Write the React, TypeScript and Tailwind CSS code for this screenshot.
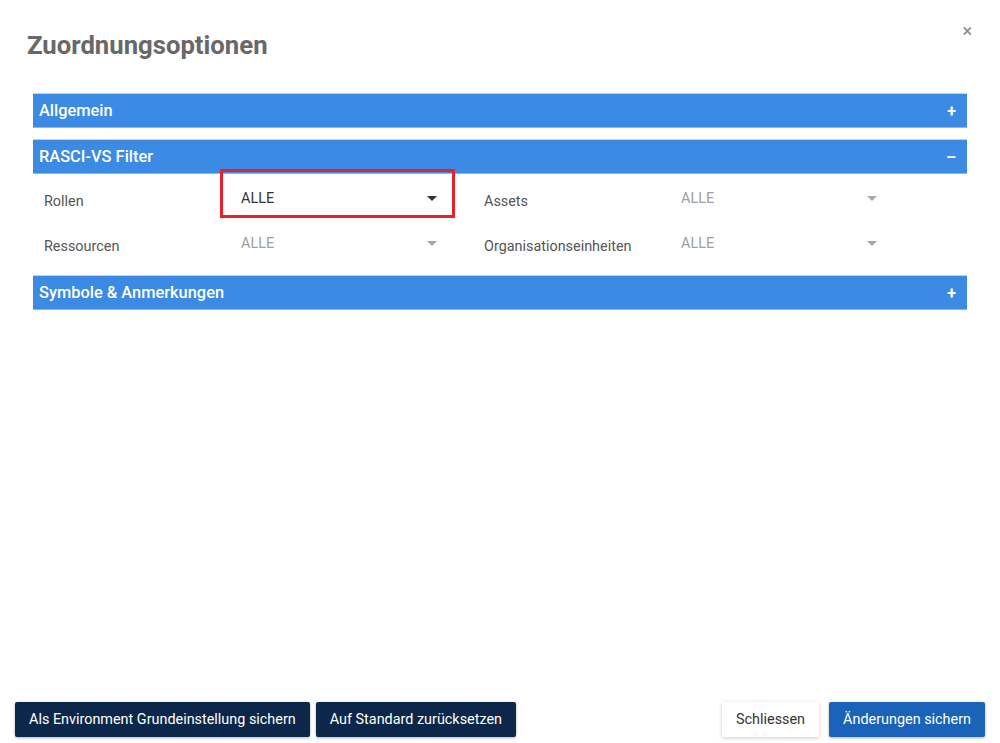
import React from 'react';

interface FilterField {
  label: string;
  value: string;
  active?: boolean;
}

const leftFields: FilterField[] = [
  { label: 'Rollen', value: 'ALLE', active: true },
  { label: 'Ressourcen', value: 'ALLE' },
];

const rightFields: FilterField[] = [
  { label: 'Assets', value: 'ALLE' },
  { label: 'Organisationseinheiten', value: 'ALLE' },
];

const Caret: React.FC<{ active?: boolean }> = ({ active }) => (
  <svg width="10" height="5" viewBox="0 0 10 5" className="shrink-0">
    <path d="M0 0 L10 0 L5 5 Z" fill={active ? '#333333' : '#a8a8a8'} />
  </svg>
);

const PanelHeader: React.FC<{ title: string; open?: boolean }> = ({ title, open }) => (
  <div className="h-[35px] pt-[2px] flex items-center justify-between pl-[6px] pr-[11px] bg-[#3b8ae3] border-t border-t-[#b9d5f5] border-b border-b-[#8ab8ee] text-white">
    <span className="text-[16.4px] font-medium">{title}</span>
    <span className="text-[16px] font-bold leading-none">{open ? '–' : '+'}</span>
  </div>
);

const FieldRow: React.FC<{ field: FilterField }> = ({ field }) => (
  <div className="h-[45px] flex items-center">
    <div className="w-[178px] text-[14.4px] text-[#555] pt-[5px]">{field.label}</div>
    <div className="w-[233px] flex items-center justify-between pl-[19px] pr-[18px] pb-[1px]">
      <span className={`text-[14.4px] ${field.active ? 'text-[#333]' : 'text-[#a0a0a0]'}`}>{field.value}</span>
      <Caret active={field.active} />
    </div>
  </div>
);

export default function App() {
  return (
    <div
      className="relative w-full h-[743px] bg-white flex flex-col"
      style={{ fontFamily: 'Roboto, "Liberation Sans", sans-serif' }}
    >
      {/* Close */}
      <button className="absolute top-[22px] right-[28px] text-[#8a8a8a] text-[18px] leading-none">×</button>

      <h1 className="pt-[30px] pl-[27px] text-[25.7px] font-bold text-[#686868] leading-[30px]">
        Zuordnungsoptionen
      </h1>

      <div className="mt-[33px] px-[33px] flex flex-col">
        <PanelHeader title="Allgemein" />

        <div className="mt-[11px]">
          <PanelHeader title="RASCI-VS Filter" open />
          <div className="relative pl-[11px] pt-[3px] grid grid-cols-[440px_440px]">
            <div>
              {leftFields.map((f) => (
                <FieldRow key={f.label} field={f} />
              ))}
            </div>
            <div>
              {rightFields.map((f) => (
                <FieldRow key={f.label} field={f} />
              ))}
            </div>
            {/* highlight annotation */}
            <div className="absolute left-[187px] top-[-5px] w-[235px] h-[49px] border-[3px] border-[#e8202a]" />
          </div>
        </div>

        <div className="mt-[8px]">
          <PanelHeader title="Symbole & Anmerkungen" />
        </div>
      </div>

      <div className="mt-auto px-[15px] pb-[6px] flex items-center">
        <button className="h-[35px] px-[14px] rounded-[2px] bg-[#0c2749] text-white text-[14.4px] shadow-[0_1px_3px_rgba(0,0,0,0.3)]">
          Als Environment Grundeinstellung sichern
        </button>
        <button className="ml-[6px] h-[35px] px-[14px] rounded-[2px] bg-[#0c2749] text-white text-[14.4px] shadow-[0_1px_3px_rgba(0,0,0,0.3)]">
          Auf Standard zurücksetzen
        </button>
        <button className="ml-auto h-[35px] px-[14px] rounded-[2px] bg-white text-[#333] text-[14.4px] shadow-[0_1px_4px_rgba(0,0,0,0.2)]">
          Schliessen
        </button>
        <button className="ml-[10px] h-[35px] px-[14px] rounded-[2px] bg-[#1a63b8] text-white text-[14.4px] shadow-[0_1px_3px_rgba(0,0,0,0.3)]">
          Änderungen sichern
        </button>
      </div>
    </div>
  );
}
